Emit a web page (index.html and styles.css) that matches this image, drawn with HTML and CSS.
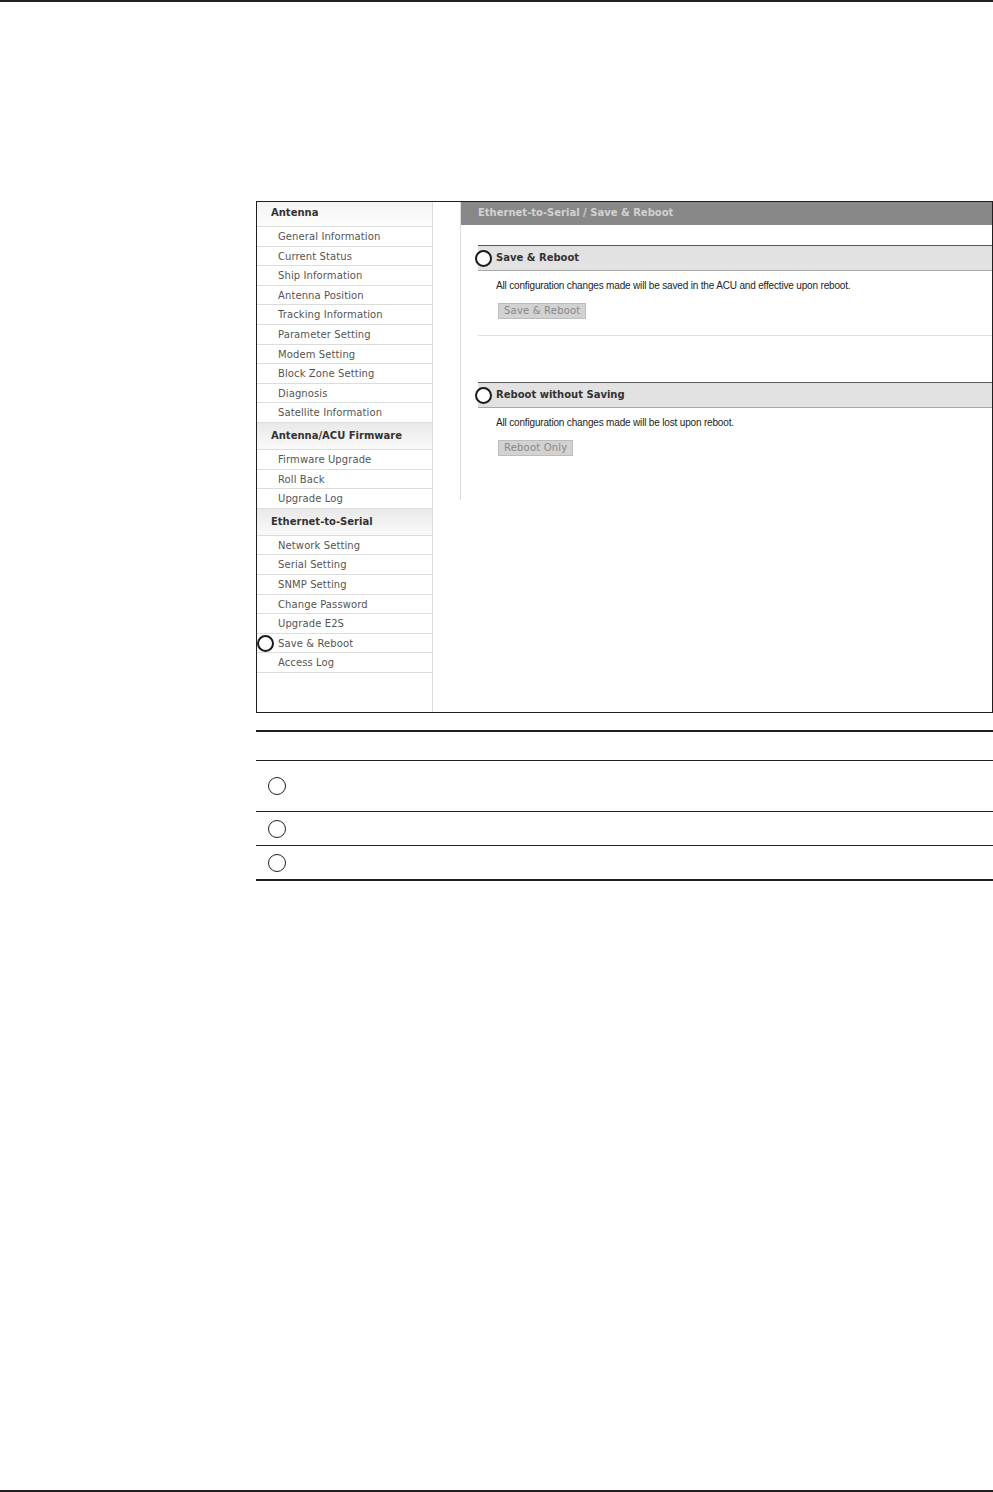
FILE: index.html
```html
<!DOCTYPE html>
<html lang="en">
<head>
    <meta charset="UTF-8">
    <meta name="viewport" content="width=device-width, initial-scale=1.0">
    <title>Ethernet-to-Serial / Save &amp; Reboot</title>
    <link rel="stylesheet" href="styles.css">
</head>
<body>
    <div class="page">
        <div class="rule-top"></div>

        <div class="figure">
            <div class="shot">
                <nav class="side">
                    <div class="nav-head first">Antenna</div>
                    <div class="nav-item">General Information</div>
                    <div class="nav-item">Current Status</div>
                    <div class="nav-item">Ship Information</div>
                    <div class="nav-item">Antenna Position</div>
                    <div class="nav-item">Tracking Information</div>
                    <div class="nav-item">Parameter Setting</div>
                    <div class="nav-item">Modem Setting</div>
                    <div class="nav-item">Block Zone Setting</div>
                    <div class="nav-item">Diagnosis</div>
                    <div class="nav-item">Satellite Information</div>

                    <div class="nav-head">Antenna/ACU Firmware</div>
                    <div class="nav-item">Firmware Upgrade</div>
                    <div class="nav-item">Roll Back</div>
                    <div class="nav-item">Upgrade Log</div>

                    <div class="nav-head">Ethernet-to-Serial</div>
                    <div class="nav-item">Network Setting</div>
                    <div class="nav-item">Serial Setting</div>
                    <div class="nav-item">SNMP Setting</div>
                    <div class="nav-item">Change Password</div>
                    <div class="nav-item">Upgrade E2S</div>
                    <div class="nav-item marked"><span class="mark"></span>Save &amp; Reboot</div>
                    <div class="nav-item">Access Log</div>
                </nav>

                <div class="main">
                    <div class="crumb">Ethernet-to-Serial / Save &amp; Reboot</div>

                    <section class="block">
                        <h2 class="block-title"><span class="mark"></span>Save &amp; Reboot</h2>
                        <p class="block-text">All configuration changes made will be saved in the ACU and effective upon reboot.</p>
                        <button class="btn" disabled>Save &amp; Reboot</button>
                    </section>

                    <div class="sep"></div>

                    <section class="block second">
                        <h2 class="block-title"><span class="mark"></span>Reboot without Saving</h2>
                        <p class="block-text">All configuration changes made will be lost upon reboot.</p>
                        <button class="btn" disabled>Reboot Only</button>
                    </section>
                </div>
            </div>

            <div class="legend">
                <div class="legend-head"></div>
                <div class="legend-row tall"><span class="num"></span></div>
                <div class="legend-row"><span class="num"></span></div>
                <div class="legend-row last"><span class="num"></span></div>
            </div>
        </div>

        <div class="rule-bottom"></div>
    </div>
</body>
</html>
```

FILE: styles.css
```css
body {
    margin: 0;
    background: #fff;
    font-family: "DejaVu Sans", Verdana, sans-serif;
}
.page {
    display: flex;
    flex-direction: column;
    height: 1492px;
}
.rule-top {
    height: 2px;
    background: #231f20;
}
.rule-bottom {
    margin-top: auto;
    height: 2px;
    background: #231f20;
}
.figure {
    margin: 199px 0 0 256px;
}

/* screenshot frame */
.shot {
    display: flex;
    width: 737px;
    height: 512px;
    box-sizing: border-box;
    border: 1px solid #231f20;
}
.side {
    width: 176px;
    flex-shrink: 0;
    box-sizing: border-box;
    border-right: 1px solid #dcdcdc;
}
.nav-head {
    height: 26px;
    line-height: 26px;
    padding-left: 14px;
    font-size: 10px;
    font-weight: bold;
    color: #333;
    background: linear-gradient(#e9e9e9, #fafafa);
    border-bottom: 1px solid #dcdcdc;
}
.nav-head.first {
    height: 24px;
    line-height: 22px;
    background: linear-gradient(#f4f4f4, #fcfcfc);
}
.nav-item {
    height: 18.6px;
    line-height: 19px;
    padding-left: 21px;
    font-size: 10px;
    color: #555;
    letter-spacing: 0.1px;
    border-bottom: 1px solid #dcdcdc;
}
.marked {
    position: relative;
}
.mark {
    position: absolute;
    width: 17px;
    height: 17px;
    box-sizing: border-box;
    border: 2px solid #1a1a1a;
    border-radius: 50%;
    background: #fff;
}
.marked .mark {
    left: 0;
    top: 1px;
}

.main {
    margin-left: 27px;
    flex: 1;
    height: 298px;
    border-left: 1px solid #dcdcdc;
}
.crumb {
    height: 23px;
    line-height: 22px;
    padding-left: 17px;
    background: #888;
    color: #d2d2d2;
    font-size: 10px;
    font-weight: bold;
}
.block {
    margin: 20px 0 0 17px;
}
.block.second {
    margin-top: 46px;
}
.block-title {
    position: relative;
    margin: 0;
    height: 24px;
    line-height: 24px;
    padding-left: 18px;
    font-size: 10px;
    font-weight: bold;
    color: #333;
    background: #e2e2e2;
    border-top: 1px solid #5a5a5a;
    border-bottom: 1px solid #a8a8a8;
}
.block-title .mark {
    left: -3px;
    top: 4px;
}
.block-text {
    margin: 9px 0 0 18px;
    font-family: "Liberation Sans", Arial, sans-serif;
    font-size: 10px;
    line-height: 12px;
    color: #222;
    letter-spacing: -0.17px;
}
.btn {
    display: block;
    margin: 11px 0 0 20px;
    height: 16px;
    padding: 0 5px;
    font-family: "DejaVu Sans", Verdana, sans-serif;
    font-size: 10px;
    line-height: 14px;
    color: #888;
    letter-spacing: 0.2px;
    background: #d2d2d2;
    border: 1px solid #bcbcbc;
}
.sep {
    margin: 16px 0 0 17px;
    border-top: 1px solid #e0e0e0;
}

/* legend table under the screenshot */
.legend {
    margin-top: 17px;
    width: 737px;
    border-top: 2px solid #231f20;
    border-bottom: 2px solid #231f20;
}
.legend-head {
    height: 28px;
    border-bottom: 1px solid #231f20;
}
.legend-row {
    display: flex;
    align-items: center;
    height: 33px;
    padding-left: 12px;
    border-bottom: 1px solid #231f20;
}
.legend-row.tall {
    height: 50px;
}
.legend-row.last {
    border-bottom: none;
}
.num {
    width: 18px;
    height: 18px;
    box-sizing: border-box;
    border: 1.3px solid #231f20;
    border-radius: 50%;
}
```
